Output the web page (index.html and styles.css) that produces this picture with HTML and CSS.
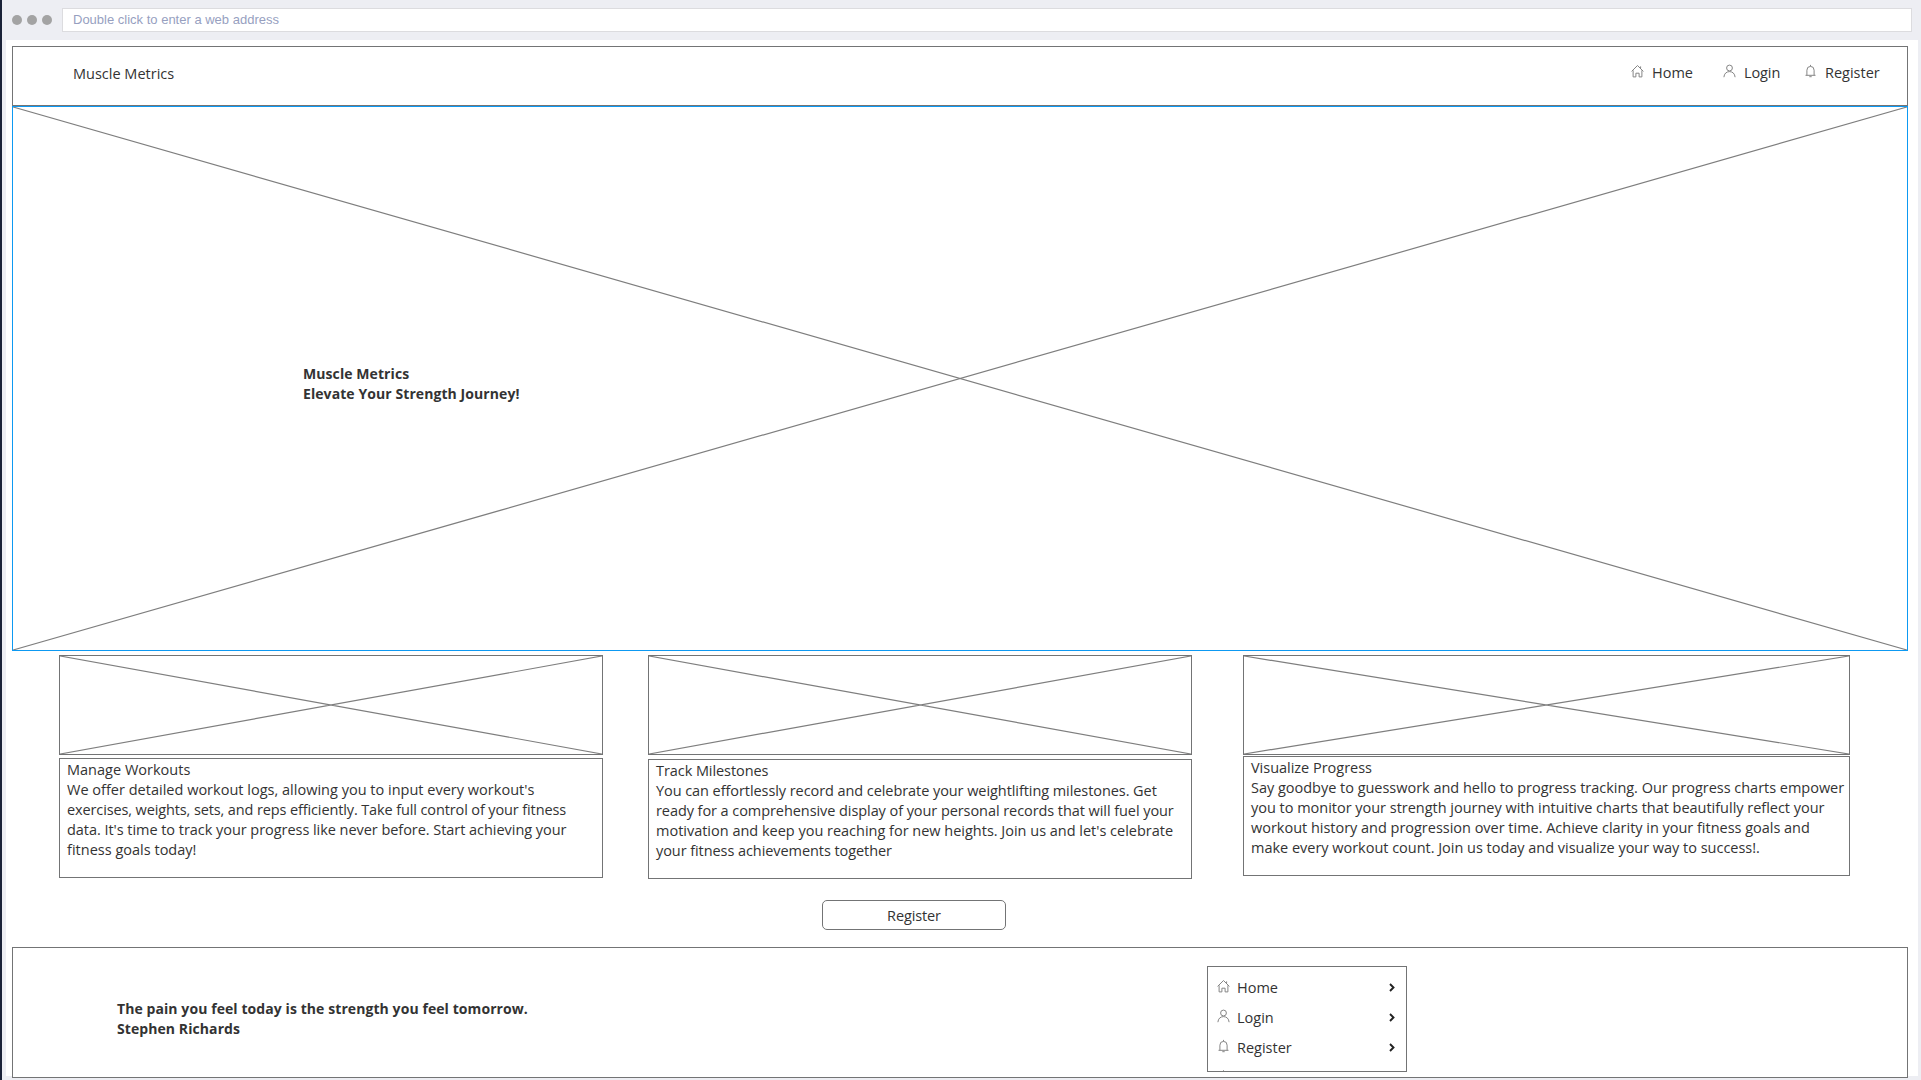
FILE: index.html
```
<!DOCTYPE html>
<html lang="en">
<head>
<meta charset="utf-8">
<title>Muscle Metrics</title>
<link rel="stylesheet" href="styles.css">
</head>
<body>
<svg class="defs" width="0" height="0" aria-hidden="true">
  <symbol id="home" viewBox="0 0 13 14"><path d="M.6 7.4 6.5 1.5l5.9 5.9M2.1 6.3v6.6h2.8V9.2h3.2v3.7h2.8V6.3M9.6 4.2V2.4"/></symbol>
  <symbol id="user" viewBox="0 0 13 14"><circle cx="6.5" cy="4" r="2.9"/><path d="M.9 13.2C1.2 9.6 3.4 7.6 6.5 7.6s5.3 2 5.6 5.6"/></symbol>
  <symbol id="bell" viewBox="0 0 13 14"><path d="M1.5 11.3h10M2.9 11.3V6.2a3.6 3.8 0 0 1 7.2 0v5.1M6.5 2.4V.9M5.3 12.7h2.4"/></symbol>
</svg>
<div class="browser">
  <header class="chrome">
    <div class="dots"><i></i><i></i><i></i></div>
    <div class="address">Double click to enter a web address</div>
  </header>
  <main class="page">
    <nav class="topbar">
      <span class="brand">Muscle Metrics</span>
      <a class="link link-home"><svg class="icon"><use href="#home"/></svg>Home</a>
      <a class="link link-login"><svg class="icon"><use href="#user"/></svg>Login</a>
      <a class="link link-register"><svg class="icon"><use href="#bell"/></svg>Register</a>
    </nav>
    <section class="hero">
      <svg class="cross" viewBox="0 0 100 100" preserveAspectRatio="none"><path d="M0 0 100 100M100 0 0 100"/></svg>
      <h1 class="bold">Muscle Metrics<br>Elevate Your Strength Journey!</h1>
    </section>
    <section class="features">
      <article class="feature">
        <div class="image"><svg class="cross" viewBox="0 0 100 100" preserveAspectRatio="none"><path d="M0 0 100 100M100 0 0 100"/></svg></div>
        <div class="copy copy-manage">Manage Workouts<br>We offer detailed workout logs, allowing you to input every workout's<br><span class="tight">exercises, weights, sets, and reps efficiently. Take full control of your fitness</span><br><span class="snug">data. It's time to track your progress like never before. Start achieving your</span><br>fitness goals today!</div>
      </article>
      <article class="feature">
        <div class="image"><svg class="cross" viewBox="0 0 100 100" preserveAspectRatio="none"><path d="M0 0 100 100M100 0 0 100"/></svg></div>
        <div class="copy copy-track">Track Milestones<br>You can effortlessly record and celebrate your weightlifting milestones. Get<br>ready for a comprehensive display of your personal records that will fuel your<br><span class="loose">motivation and keep you reaching for new heights. Join us and let's celebrate</span><br>your fitness achievements together</div>
      </article>
      <article class="feature">
        <div class="image"><svg class="cross" viewBox="0 0 100 100" preserveAspectRatio="none"><path d="M0 0 100 100M100 0 0 100"/></svg></div>
        <div class="copy copy-visualize">Visualize Progress<br>Say goodbye to guesswork and hello to progress tracking. Our progress charts empower<br>you to monitor your strength journey with intuitive charts that beautifully reflect your<br>workout history and progression over time. Achieve clarity in your fitness goals and<br>make every workout count. Join us today and visualize your way to success!.</div>
      </article>
    </section>
    <button class="register">Register</button>
    <footer class="footer">
      <p class="bold">The pain you feel today is the strength you feel tomorrow.<br>Stephen Richards</p>
      <div class="menu">
        <a class="item"><svg class="icon"><use href="#home"/></svg>Home<svg class="chevron" viewBox="0 0 6 9"><path d="m1 1 3.5 3.5L1 8"/></svg></a>
        <a class="item"><svg class="icon"><use href="#user"/></svg>Login<svg class="chevron" viewBox="0 0 6 9"><path d="m1 1 3.5 3.5L1 8"/></svg></a>
        <a class="item"><svg class="icon"><use href="#bell"/></svg>Register<svg class="chevron" viewBox="0 0 6 9"><path d="m1 1 3.5 3.5L1 8"/></svg></a>
        <a class="item"><svg class="icon"><use href="#home"/></svg></a>
      </div>
    </footer>
  </main>
</div>
</body>
</html>
```
FILE: styles.css
```
* { box-sizing: border-box; }

body {
  margin: 0;
  height: 1080px;
  overflow: hidden;
  background: #edeef3;
  color: #333;
  font: 14.5px/20px "Open Sans", "Noto Sans", sans-serif;
}

.defs { display: block; }

.browser {
  height: 1080px;
  border-left: 2px solid #1a2238;
  padding: 0 3px 0 4px;
}

.chrome {
  display: flex;
  align-items: center;
  height: 40px;
  padding: 0 6px;
}

.dots { display: flex; gap: 5px; width: 50px; }
.dots i { width: 10px; height: 10px; border-radius: 50%; background: #a3a3a3; }

.address {
  flex: 1;
  height: 24px;
  padding-left: 10px;
  border: 1px solid #dcdcdf;
  background: #fff;
  color: #979fbf;
  font: 13px/21px "Liberation Sans", Arial, sans-serif;
}

.page {
  display: flex;
  flex-direction: column;
  height: 1036px;
  padding: 6px 10px 0 6px;
  background: #fff;
}

.topbar {
  display: flex;
  flex: none;
  height: 60px;
  padding: 16px 28px 0 60px;
  border: 1px solid #737475;
}

.brand { margin: 1px auto 0 0; }

.link { display: flex; }
.icon {
  flex: none;
  width: 13px;
  height: 14px;
  margin-top: 2px;
  fill: none;
  stroke: #858585;
  stroke-width: 1;
}
.link .icon { margin: 1px 8px 0 0; }
.link-home { width: 92px; }
.link-login { width: 82px; letter-spacing: -.1px; }
.link-register { width: 74px; }
.link-register .icon { margin: 1px 8px 0 -1px; }

.hero {
  position: relative;
  flex: none;
  height: 545px;
  padding: 257px 0 0 290px;
  border: 1px solid #0d99f2;
}

.cross {
  position: absolute;
  inset: 0;
  width: 100%;
  height: 100%;
}
.cross path {
  fill: none;
  stroke: #7e7e7e;
  stroke-width: 1.2;
  vector-effect: non-scaling-stroke;
}

.bold {
  position: relative;
  margin: 0;
  font-size: 14px;
  font-weight: 700;
  line-height: 20px;
  letter-spacing: .08px;
}

.features {
  display: grid;
  flex: none;
  grid-template-columns: 544px 544px 607px;
  column-gap: 45px;
  height: 228px;
  margin: 4px 0 0 47px;
}
.feature:last-child { margin-left: 6px; margin-right: -6px; }

.image { position: relative; height: 100px; border: 1px solid #737475; }

.copy {
  height: 120px;
  padding: 1px 0 0 7px;
  border: 1px solid #737475;
  white-space: nowrap;
}
.copy-manage { margin-top: 3px; letter-spacing: .01px; }
.copy-track { margin-top: 4px; letter-spacing: -.07px; }
.copy-visualize { margin-top: 1px; letter-spacing: -.02px; }
.tight { letter-spacing: -.12px; }
.snug { letter-spacing: -.045px; }
.loose { letter-spacing: -.01px; }

.register {
  flex: none;
  width: 184px;
  height: 30px;
  margin: 17px 0 0 810px;
  padding: 1px 0 0;
  border: 1px solid #737475;
  border-radius: 5px;
  background: #fff;
  color: #333;
  font: inherit;
  letter-spacing: -.12px;
}

.footer {
  display: flex;
  flex: none;
  height: 131px;
  margin-top: 17px;
  padding: 18px 0 0 104px;
  border: 1px solid #737475;
  background: #fff;
}
.footer .bold { width: 1090px; padding-top: 33px; }

.menu {
  width: 200px;
  height: 106px;
  padding-top: 5px;
  border: 1px solid #737475;
  overflow: hidden;
}
.item {
  display: flex;
  height: 30px;
  padding: 6px 11px 0 9px;
}
.item .icon { margin: 1px 7px 0 0; }
.chevron {
  width: 6px;
  height: 9px;
  margin: 5px 0 0 auto;
  fill: none;
  stroke: #222;
  stroke-width: 1.9;
}
```
